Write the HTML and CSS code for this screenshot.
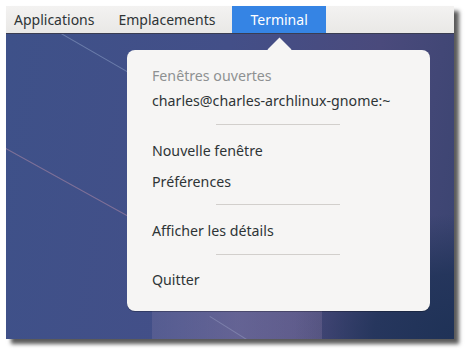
FILE: index.html
```html
<!DOCTYPE html>
<html lang="fr">

<head>
  <meta charset="UTF-8" />
  <title>Terminal</title>
  <link rel="stylesheet" href="styles.css">
</head>

<body>
  <div class="window">
    <div class="top-bar">
      <span class="bar-item">Applications</span>
      <span class="bar-item">Emplacements</span>
      <span class="bar-item active">Terminal</span>
    </div>

    <div class="desktop">
      <div class="streak streak-1"></div>
      <div class="streak streak-2"></div>
      <div class="streak streak-3"></div>
      <div class="band"></div>

      <div class="menu-arrow"></div>
      <div class="menu">
        <div class="menu-heading">Fenêtres ouvertes</div>
        <div class="menu-window">charles@charles-archlinux-gnome:~</div>
        <div class="menu-sep sep-1"></div>
        <div class="menu-item">Nouvelle fenêtre</div>
        <div class="menu-item">Préférences</div>
        <div class="menu-sep sep-2"></div>
        <div class="menu-item">Afficher les détails</div>
        <div class="menu-sep sep-3"></div>
        <div class="menu-item">Quitter</div>
      </div>
    </div>
  </div>
</body>

</html>
```

FILE: styles.css
```css
body {
  margin: 0;
  background: #ffffff;
  font-family: 'Noto Sans', 'Open Sans', sans-serif;
  width: 474px;
  height: 359px;
  overflow: hidden;
}

.window {
  margin: 6px 0 0 6px;
  width: 448px;
  height: 333px;
  display: flex;
  flex-direction: column;
  box-shadow: 5px 5px 4px rgba(0, 0, 0, 0.65);
}

.top-bar {
  height: 27px;
  background: linear-gradient(#f3f2f1, #e9e8e6);
  border-bottom: 1px solid #3a3d52;
  display: flex;
  align-items: stretch;
  padding-left: 1px;
  font-size: 14px;
  color: #2e3436;
}

.bar-item {
  display: flex;
  align-items: center;
  padding: 0 12px 0 7px;
}

.bar-item:nth-child(2) {
  padding: 0 12px 0 12px;
}

.bar-item.active {
  background: #3584e4;
  color: #ffffff;
  padding: 0 18px 0 18px;
  margin-left: 5px;
}

.desktop {
  flex: 1;
  position: relative;
  overflow: hidden;
  background:
    radial-gradient(ellipse 160px 120px at 448px 300px, #1f3257 0%, rgba(31, 50, 87, 0.8) 50%, rgba(31, 50, 87, 0) 100%),
    linear-gradient(100deg, #3e5189 0%, #434f88 45%, #4a4a7c 75%, #3a4470 100%);
}

.band {
  position: absolute;
  left: 146px;
  top: 270px;
  width: 170px;
  height: 40px;
  background: linear-gradient(90deg, rgba(140, 130, 170, 0.25), rgba(150, 135, 175, 0.38) 50%, rgba(140, 125, 165, 0.3));
}

.streak {
  position: absolute;
  height: 1px;
  background: rgba(170, 190, 220, 0.4);
  transform-origin: 0 0;
}

.streak-1 {
  left: 50px;
  top: -4px;
  width: 140px;
  transform: rotate(30deg);
}

.streak-2 {
  left: 0;
  top: 114px;
  width: 140px;
  transform: rotate(29deg);
  background: rgba(200, 150, 170, 0.45);
}

.streak-3 {
  left: 204px;
  top: 282px;
  width: 70px;
  transform: rotate(32deg);
}

.menu-arrow {
  position: absolute;
  left: 265px;
  top: 7px;
  width: 17px;
  height: 17px;
  background: #f6f5f4;
  transform: rotate(45deg);
}

.menu {
  position: absolute;
  left: 121px;
  top: 16px;
  width: 303px;
  height: 261px;
  box-sizing: border-box;
  padding: 13px 0 0 25px;
  background: #f6f5f4;
  border-radius: 8px;
  box-shadow: 0 1px 0 rgba(0, 0, 0, 0.25);
  font-size: 14.2px;
  color: #2e3436;
}

.menu-heading {
  height: 26px;
  line-height: 26px;
  color: #8e9192;
}

.menu-window {
  height: 24px;
  line-height: 24px;
}

.menu-item {
  height: 31px;
  line-height: 31px;
}

.menu-sep {
  width: 124px;
  height: 1px;
  background: #d2cfcc;
  margin-left: 64px;
}

.sep-1 {
  margin-top: 11px;
  margin-bottom: 10px;
}

.sep-2 {
  margin-top: 7px;
  margin-bottom: 10px;
}

.sep-3 {
  margin-top: 8px;
  margin-bottom: 9px;
}
```
